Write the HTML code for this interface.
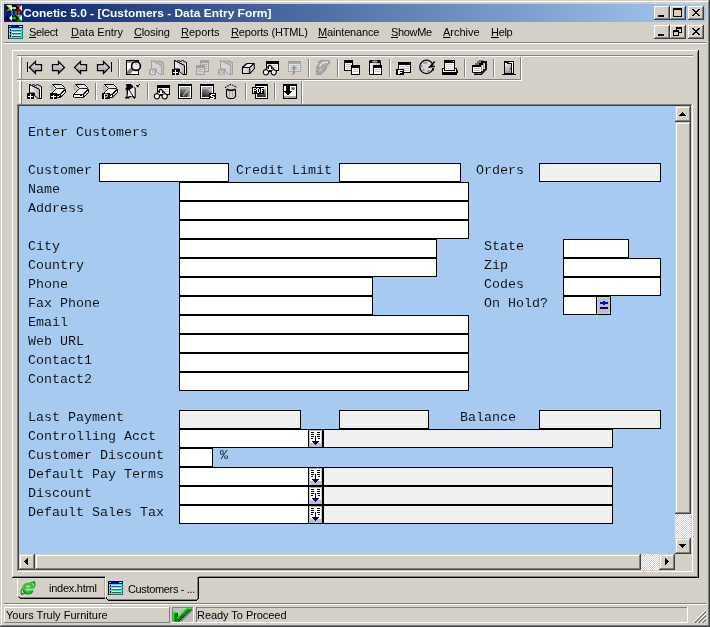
<!DOCTYPE html><html><head><meta charset="utf-8"><title>Conetic</title><style>
html,body{margin:0;padding:0;}
body{width:710px;height:627px;overflow:hidden;background:#d4d0c8;position:relative;font-family:"Liberation Sans",sans-serif;font-size:11px;color:#000;}
div,span,svg{position:absolute;box-sizing:border-box;}
.t{white-space:pre;line-height:1;will-change:transform;}
.m{font-family:"Liberation Mono",monospace;font-size:13.333px;white-space:pre;line-height:1;letter-spacing:0px;-webkit-text-stroke:0.1px #a6caf0;will-change:transform;}
.f{border:1px solid #000;background:#fff;height:19px;}
.g{border:1px solid #000;background:#f0f0f0;height:19px;}
u{text-decoration:underline;text-decoration-thickness:1px;text-underline-offset:1px;}
</style></head><body>
<div style="left:0px;top:0px;width:710px;height:627px;background:#d4d0c8;"></div>
<div style="left:0px;top:0px;width:709px;height:1px;background:#d4d0c8;"></div>
<div style="left:0px;top:0px;width:1px;height:626px;background:#d4d0c8;"></div>
<div style="left:1px;top:1px;width:707px;height:1px;background:#fff;"></div>
<div style="left:1px;top:1px;width:1px;height:624px;background:#fff;"></div>
<div style="left:0px;top:626px;width:710px;height:1px;background:#404040;"></div>
<div style="left:709px;top:0px;width:1px;height:627px;background:#404040;"></div>
<div style="left:1px;top:625px;width:708px;height:1px;background:#808080;"></div>
<div style="left:708px;top:1px;width:1px;height:625px;background:#808080;"></div>
<div style="left:4px;top:4px;width:702px;height:18px;background:linear-gradient(to right,#0a246a,#a6caf0);"></div>
<span class="t" style="left:23px;top:8px;font-weight:bold;font-size:11px;color:#fff;transform-origin:0 0;transform:scaleX(1.087);">Conetic 5.0 - [Customers - Data Entry Form]</span>
<svg style="left:6px;top:5px" width="16" height="16" viewBox="0 0 16 16"><rect x="0" y="0" width="6" height="6" fill="#000"/><polygon points="0,0 6,0 3,3" fill="#ffff00"/><polygon points="0,6 6,6 3,3" fill="#808000"/><polygon points="6,0 6,6 3,3" fill="#fff"/><rect x="10" y="0" width="6" height="6" fill="#000"/><polygon points="10,0 16,0 13,3" fill="#ff0000"/><polygon points="10,6 16,6 13,3" fill="#800000"/><polygon points="16,0 16,6 13,3" fill="#fff"/><rect x="0" y="10" width="6" height="6" fill="#000"/><polygon points="0,10 6,10 3,13" fill="#0000ff"/><polygon points="0,16 6,16 3,13" fill="#000080"/><polygon points="6,10 6,16 3,13" fill="#fff"/><rect x="10" y="10" width="6" height="6" fill="#000"/><polygon points="10,10 16,10 13,13" fill="#00ff00"/><polygon points="10,16 16,16 13,13" fill="#008000"/><polygon points="16,10 16,16 13,13" fill="#fff"/><rect x="6" y="0" width="4" height="6" fill="#000820"/><rect x="6" y="10" width="4" height="6" fill="#000820"/><rect x="1" y="6" width="14" height="4" fill="#061a5a"/><rect x="6" y="2" width="4" height="2" fill="#d8d800"/><rect x="6" y="12" width="4" height="2" fill="#00b800"/><rect x="2" y="6" width="2" height="4" fill="#0000c0"/><rect x="12" y="6" width="2" height="4" fill="#f02020"/><rect x="5" y="6" width="3" height="4" fill="#008890"/><rect x="9" y="6" width="2" height="4" fill="#008088"/><rect x="7" y="4" width="2" height="8" fill="#102878"/></svg>
<div style="left:654px;top:6px;width:16px;height:14px;background:#d4d0c8;"></div><div style="left:654px;top:6px;width:15px;height:1px;background:#fff;"></div><div style="left:654px;top:6px;width:1px;height:13px;background:#fff;"></div><div style="left:654px;top:19px;width:16px;height:1px;background:#404040;"></div><div style="left:669px;top:6px;width:1px;height:14px;background:#404040;"></div><div style="left:655px;top:18px;width:14px;height:1px;background:#808080;"></div><div style="left:668px;top:7px;width:1px;height:12px;background:#808080;"></div>
<div style="left:670px;top:6px;width:16px;height:14px;background:#d4d0c8;"></div><div style="left:670px;top:6px;width:15px;height:1px;background:#fff;"></div><div style="left:670px;top:6px;width:1px;height:13px;background:#fff;"></div><div style="left:670px;top:19px;width:16px;height:1px;background:#404040;"></div><div style="left:685px;top:6px;width:1px;height:14px;background:#404040;"></div><div style="left:671px;top:18px;width:14px;height:1px;background:#808080;"></div><div style="left:684px;top:7px;width:1px;height:12px;background:#808080;"></div>
<div style="left:688px;top:6px;width:16px;height:14px;background:#d4d0c8;"></div><div style="left:688px;top:6px;width:15px;height:1px;background:#fff;"></div><div style="left:688px;top:6px;width:1px;height:13px;background:#fff;"></div><div style="left:688px;top:19px;width:16px;height:1px;background:#404040;"></div><div style="left:703px;top:6px;width:1px;height:14px;background:#404040;"></div><div style="left:689px;top:18px;width:14px;height:1px;background:#808080;"></div><div style="left:702px;top:7px;width:1px;height:12px;background:#808080;"></div>
<div style="left:658px;top:15px;width:6px;height:2px;background:#000;"></div>
<svg style="left:692px;top:9px" width="8" height="7" viewBox="0 0 8 7" shape-rendering="crispEdges"><path d="M0 0h2v1h-2zM6 0h2v1h-2zM1 1h2v1h-2zM5 1h2v1h-2zM2 2h4v1h-4zM3 3h2v1h-2zM2 4h4v1h-4zM1 5h2v1h-2zM5 5h2v1h-2zM0 6h2v1h-2zM6 6h2v1h-2z" fill="#000"/></svg>
<div style="left:654px;top:25px;width:16px;height:14px;background:#d4d0c8;"></div><div style="left:654px;top:25px;width:15px;height:1px;background:#fff;"></div><div style="left:654px;top:25px;width:1px;height:13px;background:#fff;"></div><div style="left:654px;top:38px;width:16px;height:1px;background:#404040;"></div><div style="left:669px;top:25px;width:1px;height:14px;background:#404040;"></div><div style="left:655px;top:37px;width:14px;height:1px;background:#808080;"></div><div style="left:668px;top:26px;width:1px;height:12px;background:#808080;"></div>
<div style="left:670px;top:25px;width:16px;height:14px;background:#d4d0c8;"></div><div style="left:670px;top:25px;width:15px;height:1px;background:#fff;"></div><div style="left:670px;top:25px;width:1px;height:13px;background:#fff;"></div><div style="left:670px;top:38px;width:16px;height:1px;background:#404040;"></div><div style="left:685px;top:25px;width:1px;height:14px;background:#404040;"></div><div style="left:671px;top:37px;width:14px;height:1px;background:#808080;"></div><div style="left:684px;top:26px;width:1px;height:12px;background:#808080;"></div>
<div style="left:688px;top:25px;width:16px;height:14px;background:#d4d0c8;"></div><div style="left:688px;top:25px;width:15px;height:1px;background:#fff;"></div><div style="left:688px;top:25px;width:1px;height:13px;background:#fff;"></div><div style="left:688px;top:38px;width:16px;height:1px;background:#404040;"></div><div style="left:703px;top:25px;width:1px;height:14px;background:#404040;"></div><div style="left:689px;top:37px;width:14px;height:1px;background:#808080;"></div><div style="left:702px;top:26px;width:1px;height:12px;background:#808080;"></div>
<div style="left:658px;top:34px;width:6px;height:2px;background:#000;"></div>
<svg style="left:692px;top:28px" width="8" height="7" viewBox="0 0 8 7" shape-rendering="crispEdges"><path d="M0 0h2v1h-2zM6 0h2v1h-2zM1 1h2v1h-2zM5 1h2v1h-2zM2 2h4v1h-4zM3 3h2v1h-2zM2 4h4v1h-4zM1 5h2v1h-2zM5 5h2v1h-2zM0 6h2v1h-2zM6 6h2v1h-2z" fill="#000"/></svg>
<div style="left:673px;top:8px;width:9px;height:9px;border:1px solid #000;border-top:2px solid #000;"></div>
<div style="left:676px;top:27px;width:6px;height:6px;border:1px solid #000;border-top:2px solid #000;"></div>
<div style="left:673px;top:30px;width:6px;height:6px;background:#d4d0c8;border:1px solid #000;border-top:2px solid #000;"></div>
<svg style="left:8px;top:25px" width="15" height="14" viewBox="0 0 15 14" shape-rendering="crispEdges"><rect width="15" height="14" fill="#00ffff"/><rect width="15" height="3" fill="#000080"/><rect x="1" y="1" width="13" height="1" fill="#0000e0"/><rect x="1" y="1" width="2" height="1" fill="#8080ff"/><rect x="11" y="1" width="3" height="1" fill="#d0d0ff"/><rect x="14" y="3" width="1" height="11" fill="#008080"/><rect y="13" width="15" height="1" fill="#008080"/><rect width="1" height="14" fill="#000"/><rect x="2" y="4" width="1" height="2" fill="#000"/><rect x="4" y="4" width="9" height="1" fill="#fff"/><rect x="4" y="5" width="9" height="1" fill="#804040"/><rect x="2" y="7" width="1" height="2" fill="#000"/><rect x="4" y="7" width="9" height="1" fill="#fff"/><rect x="4" y="8" width="9" height="1" fill="#804040"/><rect x="2" y="10" width="1" height="2" fill="#000"/><rect x="4" y="10" width="9" height="1" fill="#fff"/><rect x="4" y="11" width="9" height="1" fill="#804040"/></svg>
<span class="t" style="left:29.3px;top:27px;letter-spacing:-0.3px"><u>S</u>elect</span>
<span class="t" style="left:70.5px;top:27px;letter-spacing:0px"><u>D</u>ata Entry</span>
<span class="t" style="left:133.5px;top:27px;letter-spacing:-0.15px"><u>C</u>losing</span>
<span class="t" style="left:180.5px;top:27px;letter-spacing:0px"><u>R</u>eports</span>
<span class="t" style="left:230.5px;top:27px;letter-spacing:-0.15px"><u>R</u>eports (HTML)</span>
<span class="t" style="left:317.5px;top:27px;letter-spacing:-0.15px"><u>M</u>aintenance</span>
<span class="t" style="left:390.5px;top:27px;letter-spacing:-0.35px"><u>S</u>howMe</span>
<span class="t" style="left:442.5px;top:27px;letter-spacing:0px"><u>A</u>rchive</span>
<span class="t" style="left:490.5px;top:27px;letter-spacing:-0.3px"><u>H</u>elp</span>
<div style="left:4px;top:42px;width:702px;height:1px;background:#808080;"></div>
<div style="left:4px;top:43px;width:702px;height:1px;background:#fff;"></div>
<div style="left:12px;top:50px;width:686px;height:1px;background:#fff;"></div>
<div style="left:12px;top:50px;width:1px;height:527px;background:#fff;"></div>
<div style="left:12px;top:577px;width:687px;height:1px;background:#000;"></div>
<div style="left:698px;top:50px;width:1px;height:528px;background:#000;"></div>
<div style="left:13px;top:576px;width:685px;height:1px;background:#808080;"></div>
<div style="left:697px;top:51px;width:1px;height:526px;background:#808080;"></div>
<div style="left:17px;top:55px;width:676px;height:1px;background:#808080;"></div>
<div style="left:17px;top:56px;width:676px;height:1px;background:#fff;"></div>
<div style="left:17px;top:79px;width:504px;height:1px;background:#808080;"></div>
<div style="left:17px;top:80px;width:505px;height:1px;background:#fff;"></div>
<div style="left:520px;top:57px;width:1px;height:22px;background:#808080;"></div>
<div style="left:521px;top:57px;width:1px;height:23px;background:#fff;"></div>
<div style="left:301px;top:81px;width:1px;height:23px;background:#808080;"></div>
<div style="left:302px;top:81px;width:1px;height:23px;background:#fff;"></div>
<div style="left:19px;top:57px;width:1px;height:21px;background:#fff;"></div>
<div style="left:20px;top:57px;width:1px;height:21px;background:#fff;"></div>
<div style="left:21px;top:57px;width:1px;height:22px;background:#808080;"></div>
<div style="left:19px;top:81px;width:1px;height:22px;background:#fff;"></div>
<div style="left:20px;top:81px;width:1px;height:22px;background:#fff;"></div>
<div style="left:21px;top:81px;width:1px;height:23px;background:#808080;"></div>
<div style="left:17px;top:104px;width:675px;height:1px;background:#808080;"></div>
<div style="left:17px;top:104px;width:1px;height:467px;background:#808080;"></div>
<div style="left:18px;top:105px;width:673px;height:1px;background:#404040;"></div>
<div style="left:18px;top:105px;width:1px;height:465px;background:#404040;"></div>
<div style="left:17px;top:571px;width:676px;height:1px;background:#fff;"></div>
<div style="left:692px;top:104px;width:1px;height:468px;background:#fff;"></div>
<div style="left:18px;top:570px;width:674px;height:1px;background:#d4d0c8;"></div>
<div style="left:691px;top:105px;width:1px;height:466px;background:#d4d0c8;"></div>
<div style="left:19px;top:106px;width:656px;height:448px;background:#a6caf0;"></div>
<span class="m" style="left:27.6px;top:126px">Enter Customers</span>
<span class="m" style="left:27.6px;top:164px">Customer</span>
<div class="f" style="left:99px;top:163px;width:130px"></div>
<span class="m" style="left:235.6px;top:164px">Credit Limit</span>
<div class="f" style="left:339px;top:163px;width:122px"></div>
<span class="m" style="left:475.6px;top:164px">Orders</span>
<div class="g" style="left:539px;top:163px;width:122px"></div>
<span class="m" style="left:27.6px;top:183px">Name</span>
<div class="f" style="left:179px;top:182px;width:290px"></div>
<span class="m" style="left:27.6px;top:202px">Address</span>
<div class="f" style="left:179px;top:201px;width:290px"></div>
<div class="f" style="left:179px;top:220px;width:290px"></div>
<span class="m" style="left:27.6px;top:240px">City</span>
<div class="f" style="left:179px;top:239px;width:258px"></div>
<span class="m" style="left:483.6px;top:240px">State</span>
<div class="f" style="left:563px;top:239px;width:66px"></div>
<span class="m" style="left:27.6px;top:259px">Country</span>
<div class="f" style="left:179px;top:258px;width:258px"></div>
<span class="m" style="left:483.6px;top:259px">Zip</span>
<div class="f" style="left:563px;top:258px;width:98px"></div>
<span class="m" style="left:27.6px;top:278px">Phone</span>
<div class="f" style="left:179px;top:277px;width:194px"></div>
<span class="m" style="left:483.6px;top:278px">Codes</span>
<div class="f" style="left:563px;top:277px;width:98px"></div>
<span class="m" style="left:27.6px;top:297px">Fax Phone</span>
<div class="f" style="left:179px;top:296px;width:194px"></div>
<span class="m" style="left:483.6px;top:297px">On Hold?</span>
<div class="f" style="left:563px;top:296px;width:34px"></div>
<span class="m" style="left:27.6px;top:316px">Email</span>
<div class="f" style="left:179px;top:315px;width:290px"></div>
<span class="m" style="left:27.6px;top:335px">Web URL</span>
<div class="f" style="left:179px;top:334px;width:290px"></div>
<span class="m" style="left:27.6px;top:354px">Contact1</span>
<div class="f" style="left:179px;top:353px;width:290px"></div>
<span class="m" style="left:27.6px;top:373px">Contact2</span>
<div class="f" style="left:179px;top:372px;width:290px"></div>
<span class="m" style="left:27.6px;top:411px">Last Payment</span>
<div class="g" style="left:179px;top:410px;width:122px"></div>
<div class="g" style="left:339px;top:410px;width:90px"></div>
<span class="m" style="left:459.6px;top:411px">Balance</span>
<div class="g" style="left:539px;top:410px;width:122px"></div>
<span class="m" style="left:27.6px;top:430px">Controlling Acct</span>
<div class="f" style="left:179px;top:429px;width:130px"></div>
<div class="g" style="left:323px;top:429px;width:290px"></div>
<span class="m" style="left:27.6px;top:449px">Customer Discount</span>
<div class="f" style="left:179px;top:448px;width:34px"></div>
<span class="m" style="left:219.6px;top:449px">%</span>
<span class="m" style="left:27.6px;top:468px">Default Pay Terms</span>
<div class="f" style="left:179px;top:467px;width:130px"></div>
<div class="g" style="left:323px;top:467px;width:290px"></div>
<span class="m" style="left:27.6px;top:487px">Discount</span>
<div class="f" style="left:179px;top:486px;width:130px"></div>
<div class="g" style="left:323px;top:486px;width:290px"></div>
<span class="m" style="left:27.6px;top:506px">Default Sales Tax</span>
<div class="f" style="left:179px;top:505px;width:130px"></div>
<div class="g" style="left:323px;top:505px;width:290px"></div>
<div style="left:309px;top:429px;width:14px;height:19px;background:#000"></div><svg style="left:309px;top:430px" width="13" height="17" viewBox="0 0 13 17" shape-rendering="crispEdges"><rect width="13" height="17" fill="#fff"/><rect width="13" height="1" fill="#b0b0b0"/><rect width="1" height="17" fill="#c8c8c8"/><rect x="12" width="1" height="17" fill="#c8c8c8"/><rect y="13" width="13" height="4" fill="#c0c0c0"/><rect x="2" y="2" width="3" height="1" fill="#000"/><rect x="8" y="2" width="3" height="1" fill="#000"/><rect x="2" y="4" width="3" height="1" fill="#000"/><rect x="8" y="4" width="3" height="1" fill="#000"/><rect x="2" y="6" width="3" height="1" fill="#000"/><rect x="8" y="6" width="3" height="1" fill="#000"/><rect x="2" y="8" width="2" height="1" fill="#000"/><rect x="9" y="8" width="2" height="1" fill="#000"/><rect x="6" y="6" width="1" height="6" fill="#000080"/><rect x="3" y="11" width="7" height="1" fill="#000080"/><rect x="4" y="12" width="5" height="1" fill="#000080"/><rect x="5" y="13" width="3" height="1" fill="#000080"/><rect x="6" y="14" width="1" height="1" fill="#000080"/></svg>
<div style="left:309px;top:467px;width:14px;height:19px;background:#000"></div><svg style="left:309px;top:468px" width="13" height="17" viewBox="0 0 13 17" shape-rendering="crispEdges"><rect width="13" height="17" fill="#fff"/><rect width="13" height="1" fill="#b0b0b0"/><rect width="1" height="17" fill="#c8c8c8"/><rect x="12" width="1" height="17" fill="#c8c8c8"/><rect y="13" width="13" height="4" fill="#c0c0c0"/><rect x="2" y="2" width="3" height="1" fill="#000"/><rect x="8" y="2" width="3" height="1" fill="#000"/><rect x="2" y="4" width="3" height="1" fill="#000"/><rect x="8" y="4" width="3" height="1" fill="#000"/><rect x="2" y="6" width="3" height="1" fill="#000"/><rect x="8" y="6" width="3" height="1" fill="#000"/><rect x="2" y="8" width="2" height="1" fill="#000"/><rect x="9" y="8" width="2" height="1" fill="#000"/><rect x="6" y="6" width="1" height="6" fill="#000080"/><rect x="3" y="11" width="7" height="1" fill="#000080"/><rect x="4" y="12" width="5" height="1" fill="#000080"/><rect x="5" y="13" width="3" height="1" fill="#000080"/><rect x="6" y="14" width="1" height="1" fill="#000080"/></svg>
<div style="left:309px;top:486px;width:14px;height:19px;background:#000"></div><svg style="left:309px;top:487px" width="13" height="17" viewBox="0 0 13 17" shape-rendering="crispEdges"><rect width="13" height="17" fill="#fff"/><rect width="13" height="1" fill="#b0b0b0"/><rect width="1" height="17" fill="#c8c8c8"/><rect x="12" width="1" height="17" fill="#c8c8c8"/><rect y="13" width="13" height="4" fill="#c0c0c0"/><rect x="2" y="2" width="3" height="1" fill="#000"/><rect x="8" y="2" width="3" height="1" fill="#000"/><rect x="2" y="4" width="3" height="1" fill="#000"/><rect x="8" y="4" width="3" height="1" fill="#000"/><rect x="2" y="6" width="3" height="1" fill="#000"/><rect x="8" y="6" width="3" height="1" fill="#000"/><rect x="2" y="8" width="2" height="1" fill="#000"/><rect x="9" y="8" width="2" height="1" fill="#000"/><rect x="6" y="6" width="1" height="6" fill="#000080"/><rect x="3" y="11" width="7" height="1" fill="#000080"/><rect x="4" y="12" width="5" height="1" fill="#000080"/><rect x="5" y="13" width="3" height="1" fill="#000080"/><rect x="6" y="14" width="1" height="1" fill="#000080"/></svg>
<div style="left:309px;top:505px;width:14px;height:19px;background:#000"></div><svg style="left:309px;top:506px" width="13" height="17" viewBox="0 0 13 17" shape-rendering="crispEdges"><rect width="13" height="17" fill="#fff"/><rect width="13" height="1" fill="#b0b0b0"/><rect width="1" height="17" fill="#c8c8c8"/><rect x="12" width="1" height="17" fill="#c8c8c8"/><rect y="13" width="13" height="4" fill="#c0c0c0"/><rect x="2" y="2" width="3" height="1" fill="#000"/><rect x="8" y="2" width="3" height="1" fill="#000"/><rect x="2" y="4" width="3" height="1" fill="#000"/><rect x="8" y="4" width="3" height="1" fill="#000"/><rect x="2" y="6" width="3" height="1" fill="#000"/><rect x="8" y="6" width="3" height="1" fill="#000"/><rect x="2" y="8" width="2" height="1" fill="#000"/><rect x="9" y="8" width="2" height="1" fill="#000"/><rect x="6" y="6" width="1" height="6" fill="#000080"/><rect x="3" y="11" width="7" height="1" fill="#000080"/><rect x="4" y="12" width="5" height="1" fill="#000080"/><rect x="5" y="13" width="3" height="1" fill="#000080"/><rect x="6" y="14" width="1" height="1" fill="#000080"/></svg>
<div style="left:597px;top:296px;width:14px;height:19px;background:#000"></div>
<svg style="left:597px;top:297px" width="13" height="17" viewBox="0 0 13 17" shape-rendering="crispEdges"><rect width="13" height="17" fill="#c0c0c0"/><rect x="0.5" y="0.5" width="12" height="16" fill="none" stroke="#d0d0d0"/><rect x="3" y="5" width="8" height="2" fill="#0000ff"/><rect x="6" y="4" width="2" height="4" fill="#0000ff"/><rect x="3" y="10" width="8" height="2" fill="#000080"/></svg>
<div style="left:675px;top:106px;width:16px;height:448px;background-image:linear-gradient(45deg,#fff 25%,transparent 25%,transparent 75%,#fff 75%),linear-gradient(45deg,#fff 25%,transparent 25%,transparent 75%,#fff 75%);background-size:2px 2px;background-position:0 0,1px 1px;background-color:#d4d0c8;"></div>
<div style="left:675px;top:106px;width:16px;height:16px;background:#d4d0c8;"></div><div style="left:675px;top:106px;width:15px;height:1px;background:#d4d0c8;"></div><div style="left:675px;top:106px;width:1px;height:15px;background:#d4d0c8;"></div><div style="left:676px;top:107px;width:13px;height:1px;background:#fff;"></div><div style="left:676px;top:107px;width:1px;height:13px;background:#fff;"></div><div style="left:675px;top:121px;width:16px;height:1px;background:#404040;"></div><div style="left:690px;top:106px;width:1px;height:16px;background:#404040;"></div><div style="left:676px;top:120px;width:14px;height:1px;background:#808080;"></div><div style="left:689px;top:107px;width:1px;height:14px;background:#808080;"></div>
<div style="left:675px;top:538px;width:16px;height:16px;background:#d4d0c8;"></div><div style="left:675px;top:538px;width:15px;height:1px;background:#d4d0c8;"></div><div style="left:675px;top:538px;width:1px;height:15px;background:#d4d0c8;"></div><div style="left:676px;top:539px;width:13px;height:1px;background:#fff;"></div><div style="left:676px;top:539px;width:1px;height:13px;background:#fff;"></div><div style="left:675px;top:553px;width:16px;height:1px;background:#404040;"></div><div style="left:690px;top:538px;width:1px;height:16px;background:#404040;"></div><div style="left:676px;top:552px;width:14px;height:1px;background:#808080;"></div><div style="left:689px;top:539px;width:1px;height:14px;background:#808080;"></div>
<div style="left:675px;top:122px;width:16px;height:392px;background:#d4d0c8;"></div><div style="left:675px;top:122px;width:15px;height:1px;background:#d4d0c8;"></div><div style="left:675px;top:122px;width:1px;height:391px;background:#d4d0c8;"></div><div style="left:676px;top:123px;width:13px;height:1px;background:#fff;"></div><div style="left:676px;top:123px;width:1px;height:389px;background:#fff;"></div><div style="left:675px;top:513px;width:16px;height:1px;background:#404040;"></div><div style="left:690px;top:122px;width:1px;height:392px;background:#404040;"></div><div style="left:676px;top:512px;width:14px;height:1px;background:#808080;"></div><div style="left:689px;top:123px;width:1px;height:390px;background:#808080;"></div>
<svg style="left:679px;top:112px" width="7" height="4" viewBox="0 0 7 4" shape-rendering="crispEdges"><path d="M3 0h1v1h-1zM2 1h3v1h-3zM1 2h5v1h-5zM0 3h7v1h-7z"/></svg>
<svg style="left:679px;top:544px" width="7" height="4" viewBox="0 0 7 4" shape-rendering="crispEdges"><path d="M0 0h7v1h-7zM1 1h5v1h-5zM2 2h3v1h-3zM3 3h1v1h-1z"/></svg>
<div style="left:19px;top:554px;width:656px;height:16px;background-image:linear-gradient(45deg,#fff 25%,transparent 25%,transparent 75%,#fff 75%),linear-gradient(45deg,#fff 25%,transparent 25%,transparent 75%,#fff 75%);background-size:2px 2px;background-position:0 0,1px 1px;background-color:#d4d0c8;"></div>
<div style="left:19px;top:554px;width:16px;height:16px;background:#d4d0c8;"></div><div style="left:19px;top:554px;width:15px;height:1px;background:#d4d0c8;"></div><div style="left:19px;top:554px;width:1px;height:15px;background:#d4d0c8;"></div><div style="left:20px;top:555px;width:13px;height:1px;background:#fff;"></div><div style="left:20px;top:555px;width:1px;height:13px;background:#fff;"></div><div style="left:19px;top:569px;width:16px;height:1px;background:#404040;"></div><div style="left:34px;top:554px;width:1px;height:16px;background:#404040;"></div><div style="left:20px;top:568px;width:14px;height:1px;background:#808080;"></div><div style="left:33px;top:555px;width:1px;height:14px;background:#808080;"></div>
<div style="left:659px;top:554px;width:16px;height:16px;background:#d4d0c8;"></div><div style="left:659px;top:554px;width:15px;height:1px;background:#d4d0c8;"></div><div style="left:659px;top:554px;width:1px;height:15px;background:#d4d0c8;"></div><div style="left:660px;top:555px;width:13px;height:1px;background:#fff;"></div><div style="left:660px;top:555px;width:1px;height:13px;background:#fff;"></div><div style="left:659px;top:569px;width:16px;height:1px;background:#404040;"></div><div style="left:674px;top:554px;width:1px;height:16px;background:#404040;"></div><div style="left:660px;top:568px;width:14px;height:1px;background:#808080;"></div><div style="left:673px;top:555px;width:1px;height:14px;background:#808080;"></div>
<div style="left:35px;top:554px;width:606px;height:16px;background:#d4d0c8;"></div><div style="left:35px;top:554px;width:605px;height:1px;background:#d4d0c8;"></div><div style="left:35px;top:554px;width:1px;height:15px;background:#d4d0c8;"></div><div style="left:36px;top:555px;width:603px;height:1px;background:#fff;"></div><div style="left:36px;top:555px;width:1px;height:13px;background:#fff;"></div><div style="left:35px;top:569px;width:606px;height:1px;background:#404040;"></div><div style="left:640px;top:554px;width:1px;height:16px;background:#404040;"></div><div style="left:36px;top:568px;width:604px;height:1px;background:#808080;"></div><div style="left:639px;top:555px;width:1px;height:14px;background:#808080;"></div>
<svg style="left:24px;top:558px" width="4" height="7" viewBox="0 0 4 7" shape-rendering="crispEdges"><path d="M3 0h1v7h-1zM2 1h1v5h-1zM1 2h1v3h-1zM0 3h1v1h-1z"/></svg>
<svg style="left:665px;top:558px" width="4" height="7" viewBox="0 0 4 7" shape-rendering="crispEdges"><path d="M0 0h1v7h-1zM1 1h1v5h-1zM2 2h1v3h-1zM3 3h1v1h-1z"/></svg>
<div style="left:675px;top:554px;width:16px;height:16px;background:#d4d0c8;"></div>
<div style="left:17px;top:578px;width:1px;height:18px;background:#fff;"></div>
<div style="left:18px;top:596px;width:1px;height:1px;background:#808080;"></div>
<div style="left:19px;top:597px;width:1px;height:1px;background:#000;"></div>
<div style="left:18px;top:597px;width:1px;height:1px;background:#808080;"></div>
<div style="left:20px;top:597px;width:85px;height:1px;background:#808080;"></div>
<div style="left:20px;top:598px;width:85px;height:1px;background:#000;"></div>
<div style="left:104px;top:578px;width:1px;height:19px;background:#b0aca4;"></div>
<span class="t" style="left:48.5px;top:583px;letter-spacing:-0.25px">index.html</span>
<svg style="left:20px;top:580px;overflow:visible" width="16" height="16" viewBox="0 0 16 16"><ellipse cx="8" cy="8" rx="8.3" ry="3.4" transform="rotate(-35 8 8)" fill="none" stroke="#209820" stroke-width="1.3"/><circle cx="8.2" cy="8.2" r="5.8" fill="#34c434"/><path d="M3.2 10 A5.4 5.4 0 0 0 13 11.2" stroke="#1c8c1c" stroke-width="1.3" fill="none"/><ellipse cx="8" cy="6.5" rx="2.3" ry="1" fill="#d4d0c8"/><path d="M5.6 8.8 H14 V10 H10.8 Q8 11.6 5.6 10 Z" fill="#d4d0c8"/><path d="M2.2 13.3 Q0.3 15.3 4 13.4 M12.3 2.8 Q15.6 0.2 13.8 4.2" stroke="#209820" stroke-width="1.4" fill="none"/></svg>
<div style="left:105px;top:576px;width:94px;height:25px;background:#d4d0c8;"></div>
<div style="left:105px;top:577px;width:1px;height:20px;background:#fff;"></div>
<div style="left:106px;top:597px;width:1px;height:2px;background:#000;"></div>
<div style="left:107px;top:599px;width:1px;height:1px;background:#000;"></div>
<div style="left:108px;top:600px;width:89px;height:1px;background:#000;"></div>
<div style="left:108px;top:599px;width:89px;height:1px;background:#808080;"></div>
<div style="left:197px;top:577px;width:1px;height:22px;background:#808080;"></div>
<div style="left:198px;top:577px;width:1px;height:22px;background:#000;"></div>
<div style="left:197px;top:599px;width:1px;height:1px;background:#000;"></div>
<span class="t" style="left:128px;top:584px;letter-spacing:-0.35px">Customers - ...</span>
<svg style="left:108px;top:581px" width="15" height="14" viewBox="0 0 15 14" shape-rendering="crispEdges"><rect width="15" height="14" fill="#00ffff"/><rect width="15" height="3" fill="#000080"/><rect x="1" y="1" width="13" height="1" fill="#0000e0"/><rect x="1" y="1" width="2" height="1" fill="#8080ff"/><rect x="11" y="1" width="3" height="1" fill="#d0d0ff"/><rect x="14" y="3" width="1" height="11" fill="#008080"/><rect y="13" width="15" height="1" fill="#008080"/><rect width="1" height="14" fill="#000"/><rect x="2" y="4" width="1" height="2" fill="#000"/><rect x="4" y="4" width="9" height="1" fill="#fff"/><rect x="4" y="5" width="9" height="1" fill="#804040"/><rect x="2" y="7" width="1" height="2" fill="#000"/><rect x="4" y="7" width="9" height="1" fill="#fff"/><rect x="4" y="8" width="9" height="1" fill="#804040"/><rect x="2" y="10" width="1" height="2" fill="#000"/><rect x="4" y="10" width="9" height="1" fill="#fff"/><rect x="4" y="11" width="9" height="1" fill="#804040"/></svg>
<div style="left:4px;top:603px;width:702px;height:1px;background:#808080;"></div>
<div style="left:4px;top:604px;width:702px;height:1px;background:#fff;"></div>
<div style="left:4px;top:607px;width:165px;height:1px;background:#fff;"></div><div style="left:4px;top:607px;width:1px;height:15px;background:#fff;"></div><div style="left:4px;top:622px;width:166px;height:1px;background:#808080;"></div><div style="left:169px;top:607px;width:1px;height:16px;background:#808080;"></div>
<div style="left:172px;top:607px;width:21px;height:1px;background:#808080;"></div><div style="left:172px;top:607px;width:1px;height:15px;background:#808080;"></div><div style="left:172px;top:622px;width:22px;height:1px;background:#fff;"></div><div style="left:193px;top:607px;width:1px;height:16px;background:#fff;"></div>
<div style="left:196px;top:607px;width:491px;height:1px;background:#808080;"></div><div style="left:196px;top:607px;width:1px;height:15px;background:#808080;"></div><div style="left:196px;top:622px;width:492px;height:1px;background:#fff;"></div><div style="left:687px;top:607px;width:1px;height:16px;background:#fff;"></div>
<div style="left:173px;top:608px;width:20px;height:14px;background:#c0c0c0;"></div>
<svg style="left:172px;top:607px" width="22" height="16" viewBox="172 607 22 16"><path d="M180 621.5 L192.5 609.5" stroke="#808080" stroke-width="1.8" fill="none"/><polygon points="174,613 177,613 177,618 187,608.5 191,608.5 178.5,621.7 174,621.7" fill="#008000"/><path d="M178.3 621.7 L191.6 608.8" stroke="#000080" stroke-width="1" fill="none"/><rect x="177" y="613" width="1" height="4" fill="#000080"/><path d="M173.6 612 V621.7 M173 612.5 H177 M177.2 618.3 L187 608.6 H191" stroke="#00ff00" stroke-width="1.4" fill="none"/></svg>
<span class="t" style="left:6px;top:610px">Yours Truly Furniture</span>
<span class="t" style="left:197px;top:610px;letter-spacing:-0.05px">Ready To Proceed</span>
<svg style="left:693px;top:610px" width="13" height="13" viewBox="693 610 13 13" shape-rendering="crispEdges"><rect x="705" y="610" width="1" height="1" fill="#fff"/><rect x="704" y="611" width="1" height="1" fill="#fff"/><rect x="705" y="611" width="1" height="1" fill="#808080"/><rect x="703" y="612" width="1" height="1" fill="#fff"/><rect x="704" y="612" width="1" height="1" fill="#808080"/><rect x="705" y="612" width="1" height="1" fill="#808080"/><rect x="702" y="613" width="1" height="1" fill="#fff"/><rect x="703" y="613" width="1" height="1" fill="#808080"/><rect x="704" y="613" width="1" height="1" fill="#808080"/><rect x="701" y="614" width="1" height="1" fill="#fff"/><rect x="702" y="614" width="1" height="1" fill="#808080"/><rect x="703" y="614" width="1" height="1" fill="#808080"/><rect x="705" y="614" width="1" height="1" fill="#fff"/><rect x="700" y="615" width="1" height="1" fill="#fff"/><rect x="701" y="615" width="1" height="1" fill="#808080"/><rect x="702" y="615" width="1" height="1" fill="#808080"/><rect x="704" y="615" width="1" height="1" fill="#fff"/><rect x="705" y="615" width="1" height="1" fill="#808080"/><rect x="699" y="616" width="1" height="1" fill="#fff"/><rect x="700" y="616" width="1" height="1" fill="#808080"/><rect x="701" y="616" width="1" height="1" fill="#808080"/><rect x="703" y="616" width="1" height="1" fill="#fff"/><rect x="704" y="616" width="1" height="1" fill="#808080"/><rect x="705" y="616" width="1" height="1" fill="#808080"/><rect x="698" y="617" width="1" height="1" fill="#fff"/><rect x="699" y="617" width="1" height="1" fill="#808080"/><rect x="700" y="617" width="1" height="1" fill="#808080"/><rect x="702" y="617" width="1" height="1" fill="#fff"/><rect x="703" y="617" width="1" height="1" fill="#808080"/><rect x="704" y="617" width="1" height="1" fill="#808080"/><rect x="697" y="618" width="1" height="1" fill="#fff"/><rect x="698" y="618" width="1" height="1" fill="#808080"/><rect x="699" y="618" width="1" height="1" fill="#808080"/><rect x="701" y="618" width="1" height="1" fill="#fff"/><rect x="702" y="618" width="1" height="1" fill="#808080"/><rect x="703" y="618" width="1" height="1" fill="#808080"/><rect x="705" y="618" width="1" height="1" fill="#fff"/><rect x="696" y="619" width="1" height="1" fill="#fff"/><rect x="697" y="619" width="1" height="1" fill="#808080"/><rect x="698" y="619" width="1" height="1" fill="#808080"/><rect x="700" y="619" width="1" height="1" fill="#fff"/><rect x="701" y="619" width="1" height="1" fill="#808080"/><rect x="702" y="619" width="1" height="1" fill="#808080"/><rect x="704" y="619" width="1" height="1" fill="#fff"/><rect x="705" y="619" width="1" height="1" fill="#808080"/><rect x="695" y="620" width="1" height="1" fill="#fff"/><rect x="696" y="620" width="1" height="1" fill="#808080"/><rect x="697" y="620" width="1" height="1" fill="#808080"/><rect x="699" y="620" width="1" height="1" fill="#fff"/><rect x="700" y="620" width="1" height="1" fill="#808080"/><rect x="701" y="620" width="1" height="1" fill="#808080"/><rect x="703" y="620" width="1" height="1" fill="#fff"/><rect x="704" y="620" width="1" height="1" fill="#808080"/><rect x="705" y="620" width="1" height="1" fill="#808080"/><rect x="694" y="621" width="1" height="1" fill="#fff"/><rect x="695" y="621" width="1" height="1" fill="#808080"/><rect x="696" y="621" width="1" height="1" fill="#808080"/><rect x="698" y="621" width="1" height="1" fill="#fff"/><rect x="699" y="621" width="1" height="1" fill="#808080"/><rect x="700" y="621" width="1" height="1" fill="#808080"/><rect x="702" y="621" width="1" height="1" fill="#fff"/><rect x="703" y="621" width="1" height="1" fill="#808080"/><rect x="704" y="621" width="1" height="1" fill="#808080"/><rect x="693" y="622" width="1" height="1" fill="#fff"/><rect x="694" y="622" width="1" height="1" fill="#808080"/><rect x="695" y="622" width="1" height="1" fill="#808080"/><rect x="697" y="622" width="1" height="1" fill="#fff"/><rect x="698" y="622" width="1" height="1" fill="#808080"/><rect x="699" y="622" width="1" height="1" fill="#808080"/><rect x="701" y="622" width="1" height="1" fill="#fff"/><rect x="702" y="622" width="1" height="1" fill="#808080"/><rect x="703" y="622" width="1" height="1" fill="#808080"/></svg>
<svg width="0" height="0" style="left:0;top:0"><defs><linearGradient id="ag" x1="0" y1="0" x2="0" y2="1"><stop offset="0" stop-color="#f4f4f4"/><stop offset="1" stop-color="#909090"/></linearGradient><linearGradient id="fg" x1="0" y1="0" x2="1" y2="0"><stop offset="0" stop-color="#f4f4f4"/><stop offset="1" stop-color="#b8b8b8"/></linearGradient><linearGradient id="dg" x1="0" y1="0" x2="0.4" y2="1"><stop offset="0" stop-color="#f0f0f0"/><stop offset="1" stop-color="#a0a0a0"/></linearGradient><linearGradient id="pg" x1="0.6" y1="0" x2="0.3" y2="1"><stop offset="0" stop-color="#b8b8b8"/><stop offset="0.45" stop-color="#707070"/><stop offset="1" stop-color="#202020"/></linearGradient></defs></svg>
<svg style="left:27px;top:60px;overflow:visible" width="16" height="16" viewBox="0 0 16 16"><rect x="0" y="2" width="1" height="10" fill="#000"/><polygon points="2.5,7.5 8.5,1.5 8.5,4.5 14.5,4.5 14.5,10.5 8.5,10.5 8.5,13.5" fill="url(#ag)" stroke="#000" stroke-width="1.25" stroke-linejoin="miter"/></svg>
<svg style="left:50px;top:60px;overflow:visible" width="16" height="16" viewBox="0 0 16 16"><polygon points="2.5,4.5 8.5,4.5 8.5,1.5 14.5,7.5 8.5,13.5 8.5,10.5 2.5,10.5" fill="url(#ag)" stroke="#000" stroke-width="1.25"/></svg>
<svg style="left:73px;top:60px;overflow:visible" width="16" height="16" viewBox="0 0 16 16"><polygon points="1.5,7.5 7.5,1.5 7.5,4.5 13.5,4.5 13.5,10.5 7.5,10.5 7.5,13.5" fill="url(#ag)" stroke="#000" stroke-width="1.25" stroke-linejoin="miter"/></svg>
<svg style="left:96px;top:60px;overflow:visible" width="16" height="16" viewBox="0 0 16 16"><polygon points="1.5,4.5 7.5,4.5 7.5,1.5 13.5,7.5 7.5,13.5 7.5,10.5 1.5,10.5" fill="url(#ag)" stroke="#000" stroke-width="1.25"/><rect x="15" y="2" width="1" height="10" fill="#000"/></svg>
<svg style="left:126px;top:60px;overflow:visible" width="16" height="16" viewBox="0 0 16 16"><g shape-rendering="crispEdges"><rect x="0" y="0" width="13" height="15" fill="#000"/><rect x="1" y="1" width="11" height="13" fill="#fff"/><rect x="1" y="1" width="6" height="2" fill="#909090"/></g><polygon points="1,14 1,11 5,7.5 8,10 4,14" fill="#808080"/><circle cx="10" cy="6" r="4.4" fill="#ececec" stroke="#000" stroke-width="1.6"/><path d="M9 3.5 l2 1" stroke="#a0a0a0" stroke-width="1" fill="none"/></svg>
<svg style="left:149px;top:60px;overflow:visible" width="16" height="16" viewBox="0 0 16 16"><polygon points="2.5,0.5 3.5,0.5 4.5,1.5 6.5,0.5 8.5,1.5 10.5,0.5 12.5,1.5 14.5,2.5 14.5,14.5 11.5,14.5 11.5,5" fill="#b8b8b8" stroke="#a0a0a0" stroke-width="1" stroke-linejoin="round"/><path d="M13.5 3.5 V14" stroke="#c8c8c8" stroke-width="1" fill="none"/><polygon points="2.5,0.5 4.5,1.5 12.5,5.5 12.5,14.5 11,14.5 7.5,11.5 7.5,9 2.5,9" fill="#d4d4d4" stroke="#a0a0a0" stroke-width="1" stroke-linejoin="round"/><g shape-rendering="crispEdges"><rect x="0" y="9" width="7" height="6" fill="#a8a8a8"/><rect x="2" y="10" width="1" height="4" fill="#e8e8e8"/><rect x="4" y="10" width="1" height="4" fill="#e8e8e8"/><rect x="2" y="13" width="3" height="1" fill="#e8e8e8"/></g></svg>
<svg style="left:172px;top:60px;overflow:visible" width="16" height="16" viewBox="0 0 16 16"><polygon points="2.5,0.5 3.5,0.5 4.5,1.5 6.5,0.5 8.5,1.5 10.5,0.5 12.5,1.5 14.5,2.5 14.5,14.5 11.5,14.5 11.5,5" fill="#c4c4c4" stroke="#000" stroke-width="1" stroke-linejoin="round"/><path d="M13.5 3.5 V14" stroke="#fff" stroke-width="1" fill="none"/><polygon points="2.5,0.5 4.5,1.5 12.5,5.5 12.5,14.5 11,14.5 7.5,11.5 7.5,9 2.5,9" fill="url(#fg)" stroke="#000" stroke-width="1" stroke-linejoin="round"/><g shape-rendering="crispEdges"><rect x="0" y="9" width="7" height="6" fill="#000"/><rect x="1" y="12" width="5" height="1" fill="#fff"/><rect x="3" y="10" width="1" height="5" fill="#fff"/></g></svg>
<svg style="left:196px;top:60px;overflow:visible" width="16" height="16" viewBox="0 0 16 16"><g shape-rendering="crispEdges"><rect x="4" y="0" width="9" height="12" fill="#a0a0a0"/><rect x="5" y="3" width="7" height="8" fill="#d0d0d0"/><rect x="6" y="4" width="5" height="1" fill="#b4b4b4"/><rect x="6" y="6" width="5" height="1" fill="#b4b4b4"/><rect x="6" y="8" width="5" height="1" fill="#b4b4b4"/><rect x="0" y="5" width="9" height="10" fill="#a0a0a0"/><rect x="1" y="8" width="7" height="6" fill="#d0d0d0"/><rect x="2" y="9" width="5" height="1" fill="#b4b4b4"/><rect x="2" y="11" width="5" height="1" fill="#b4b4b4"/></g></svg>
<svg style="left:218px;top:60px;overflow:visible" width="16" height="16" viewBox="0 0 16 16"><polygon points="2.5,0.5 3.5,0.5 4.5,1.5 6.5,0.5 8.5,1.5 10.5,0.5 12.5,1.5 14.5,2.5 14.5,14.5 11.5,14.5 11.5,5" fill="#b8b8b8" stroke="#a0a0a0" stroke-width="1" stroke-linejoin="round"/><path d="M13.5 3.5 V14" stroke="#c8c8c8" stroke-width="1" fill="none"/><polygon points="2.5,0.5 4.5,1.5 12.5,5.5 12.5,14.5 11,14.5 7.5,11.5 7.5,9 2.5,9" fill="#d4d4d4" stroke="#a0a0a0" stroke-width="1" stroke-linejoin="round"/><g shape-rendering="crispEdges"><rect x="0" y="9" width="7" height="6" fill="#a8a8a8"/></g><path d="M1.5 10.5 L5.5 14.5 M5.5 10.5 L1.5 14.5" stroke="#e8e8e8" stroke-width="1"/></svg>
<svg style="left:240px;top:60px;overflow:visible" width="16" height="16" viewBox="0 0 16 16"><polygon points="2.5,7.5 7,3.5 14,3.5 14.4,8.5 10,13.5 2.5,13.5" fill="#e4e4e4" stroke="#000" stroke-width="1.1" stroke-linejoin="round"/><polygon points="2.5,7.5 7,3.5 14,3.5 9.8,7.5" fill="#f4f4f4" stroke="#000" stroke-width="1.1" stroke-linejoin="round"/><rect x="2.5" y="7.5" width="7.3" height="6" rx="1" fill="url(#fg)" stroke="#000" stroke-width="1.1"/></svg>
<svg style="left:263px;top:60px;overflow:visible" width="16" height="16" viewBox="0 0 16 16"><g shape-rendering="crispEdges"><rect x="3" y="1" width="13" height="10" fill="#000"/><rect x="4" y="4" width="11" height="6" fill="#fff"/><rect x="9" y="5" width="5" height="1" fill="#c8c8c8"/><rect x="10" y="7" width="4" height="1" fill="#c8c8c8"/><rect x="5" y="4" width="4" height="1" fill="#d8d8d8"/></g><polygon points="1.2,11.5 6,5.6 7.6,5.6 12.8,11.5" fill="#fff" stroke="#000" stroke-width="1.1"/><g shape-rendering="crispEdges"><rect x="5" y="7" width="1" height="2" fill="#000"/><rect x="8" y="7" width="1" height="2" fill="#000"/><rect x="6" y="10" width="2" height="2" fill="#000"/></g><circle cx="2.9" cy="12.3" r="2.6" fill="#fff" stroke="#000" stroke-width="1.05"/><circle cx="10.7" cy="12.3" r="2.6" fill="#fff" stroke="#000" stroke-width="1.05"/></svg>
<svg style="left:286px;top:60px;overflow:visible" width="16" height="16" viewBox="0 0 16 16"><g shape-rendering="crispEdges"><rect x="2" y="1" width="13" height="11" fill="#a8a8a8"/><rect x="2" y="1" width="13" height="1" fill="#989898"/><rect x="3" y="4" width="11" height="7" fill="#e0e0e0"/><rect x="4" y="5" width="9" height="1" fill="#c4c4c4"/><rect x="4" y="7" width="9" height="1" fill="#c4c4c4"/><rect x="4" y="9" width="9" height="1" fill="#c4c4c4"/><rect x="7" y="8" width="2" height="6" fill="#989898"/><rect x="6" y="13" width="1" height="2" fill="#989898"/></g><polygon points="8,5.2 11,8.8 5,8.8" fill="#989898"/></svg>
<svg style="left:315px;top:60px;overflow:visible" width="16" height="16" viewBox="0 0 16 16"><polygon points="5,0.5 14.5,0.5 14.5,3.8 13,4 11,7 12,8 10.5,9 10,11 9,11 6,14.5 1,14.5 2.5,11.5 1,11.5 3,8 1,8 5,2.5 3,2.5" fill="#a8a8a8" stroke="#989898" stroke-width="1" stroke-linejoin="round"/><path d="M13 1.8 L7.5 2.8 L4.5 6.5" stroke="#dcdcdc" stroke-width="1.8" fill="none"/><path d="M7 8.5 L4.5 11" stroke="#c8c8c8" stroke-width="1.2" fill="none"/></svg>
<svg style="left:344px;top:60px;overflow:visible" width="16" height="16" viewBox="0 0 16 16"><g shape-rendering="crispEdges"><rect x="0" y="0" width="9" height="11" fill="#000"/><rect x="1" y="3" width="7" height="7" fill="#fff"/><rect x="2" y="4" width="5" height="1" fill="#c0c0c0"/><rect x="2" y="6" width="5" height="1" fill="#c0c0c0"/><rect x="2" y="8" width="5" height="1" fill="#c0c0c0"/><rect x="7" y="5" width="9" height="10" fill="#000"/><rect x="8" y="8" width="7" height="6" fill="#fff"/><rect x="9" y="9" width="5" height="1" fill="#c0c0c0"/><rect x="9" y="11" width="5" height="1" fill="#c0c0c0"/></g></svg>
<svg style="left:367px;top:60px;overflow:visible" width="16" height="16" viewBox="0 0 16 16"><rect x="2" y="0" width="12" height="15" rx="1.5" fill="#000"/><rect x="3" y="3" width="10" height="11" fill="url(#fg)"/><ellipse cx="8" cy="1.6" rx="3.2" ry="1.1" fill="#a0a0a0"/><g shape-rendering="crispEdges"><rect x="6" y="5" width="9" height="10" fill="#000"/><rect x="7" y="8" width="7" height="6" fill="#fff"/><rect x="8" y="9" width="5" height="1" fill="#c0c0c0"/><rect x="8" y="11" width="5" height="1" fill="#c0c0c0"/></g></svg>
<svg style="left:396px;top:60px;overflow:visible" width="16" height="16" viewBox="0 0 16 16"><g shape-rendering="crispEdges"><rect x="2" y="2" width="13" height="11" fill="#000"/><rect x="3" y="5" width="11" height="7" fill="#fff"/><rect x="4" y="6" width="9" height="1" fill="#c0c0c0"/><rect x="4" y="8" width="9" height="1" fill="#c0c0c0"/><rect x="4" y="10" width="9" height="1" fill="#c0c0c0"/><rect x="0" y="9" width="8" height="6" fill="#000"/><rect x="2" y="10" width="2" height="4" fill="#fff"/><rect x="2" y="10" width="5" height="1" fill="#fff"/><rect x="2" y="12" width="4" height="1" fill="#fff"/></g></svg>
<svg style="left:419px;top:60px;overflow:visible" width="16" height="16" viewBox="0 0 16 16"><circle cx="7.5" cy="6.9" r="6.7" fill="#d8d8d8" stroke="#000" stroke-width="1.3"/><path d="M4.2 2.8 L8.2 2.6 M2.2 5 L3 7.2 M4 9 L5.5 10.6 M8 11.2 L11 10.8" stroke="#909090" stroke-width="1.7" fill="none"/><polygon points="16.5,4.5 11.5,7.3 16.5,8.6" fill="#d4d0c8"/><path d="M15.7 1.6 L10.6 7 L15.8 6.3" stroke="#000" stroke-width="1.4" fill="none" stroke-linejoin="miter"/><path d="M14.6 8.2 Q14.4 9.5 13.7 10.8" stroke="#000" stroke-width="1.3" fill="none"/></svg>
<svg style="left:442px;top:60px;overflow:visible" width="16" height="16" viewBox="0 0 16 16"><g shape-rendering="crispEdges"><rect x="0" y="8" width="15" height="7" fill="#000"/><rect x="1" y="9" width="13" height="3" fill="#fff"/><rect x="15" y="10" width="1" height="3" fill="#000"/><rect x="2" y="0" width="11" height="11" fill="#000"/><rect x="3" y="3" width="9" height="7" fill="#fff"/><rect x="4" y="4" width="7" height="1" fill="#d0d0d0"/><rect x="4" y="6" width="7" height="1" fill="#d0d0d0"/><rect x="4" y="8" width="7" height="1" fill="#d0d0d0"/><rect x="11" y="1" width="1" height="1" fill="#e0e0e0"/></g></svg>
<svg style="left:472px;top:60px;overflow:visible" width="16" height="16" viewBox="0 0 16 16"><polygon points="0,5 0,12.5 2,13 2,15 9.5,15 15,9.5 15,1 9,1 9,3 7,3 7,5" fill="#000"/><g shape-rendering="crispEdges"><rect x="7" y="0" width="5" height="1" fill="#707070"/><rect x="5" y="1" width="4" height="2" fill="#707070"/><rect x="3" y="3" width="4" height="2" fill="#707070"/><rect x="1" y="7" width="8" height="5" fill="#fff"/><rect x="2" y="8" width="6" height="1" fill="#c8c8c8"/><rect x="2" y="10" width="6" height="1" fill="#c8c8c8"/></g><rect x="9.4" y="5" width="1.5" height="6" fill="#fff"/><rect x="11.4" y="3" width="1.5" height="6" fill="#fff"/><rect x="2" y="13" width="7.5" height="0.6" fill="#b0b0b0"/><path d="M10 12.5 L14 8.5" stroke="#d4d0c8" stroke-width=".7" stroke-dasharray=".8 .8" fill="none"/></svg>
<svg style="left:500px;top:60px;overflow:visible" width="16" height="16" viewBox="0 0 16 16"><g shape-rendering="crispEdges"><rect x="4" y="1" width="10" height="14" fill="#000"/><rect x="5" y="3" width="6" height="10" fill="url(#dg)"/><rect x="7" y="3" width="4" height="1" fill="#000"/><rect x="5" y="3" width="1" height="2" fill="#fff"/><rect x="10" y="8" width="1" height="1" fill="#000"/><rect x="9" y="2" width="4" height="1" fill="#fff"/><rect x="12" y="2" width="1" height="11" fill="#fff"/><rect x="2" y="14" width="14" height="1" fill="#000"/></g></svg>
<svg style="left:27px;top:84px;overflow:visible" width="16" height="16" viewBox="0 0 16 16"><polygon points="2.5,0.5 3.5,0.5 4.5,1.5 6.5,0.5 8.5,1.5 10.5,0.5 12.5,1.5 14.5,2.5 14.5,14.5 11.5,14.5 11.5,5" fill="#c4c4c4" stroke="#000" stroke-width="1" stroke-linejoin="round"/><path d="M13.5 3.5 V14" stroke="#fff" stroke-width="1" fill="none"/><polygon points="2.5,0.5 4.5,1.5 12.5,5.5 12.5,14.5 11,14.5 7.5,11.5 7.5,9 2.5,9" fill="url(#fg)" stroke="#000" stroke-width="1" stroke-linejoin="round"/><g shape-rendering="crispEdges"><rect x="0" y="9" width="7" height="6" fill="#000"/><rect x="1" y="12" width="5" height="1" fill="#fff"/><rect x="3" y="10" width="1" height="5" fill="#fff"/></g></svg>
<svg style="left:50px;top:84px;overflow:visible" width="16" height="16" viewBox="0 0 16 16"><path d="M0.5 1.5 l2.5 1 M0.5 3.5 l3 1 M1 5.5 l3 1" stroke="#a0a0a0" stroke-width="1" fill="none"/><polygon points="2.5,0.5 11.5,0.5 14.5,3.5 14.5,4.5 6.5,4.5" fill="#e4e4e4" stroke="#000" stroke-linejoin="round"/><polygon points="6.5,4.5 0.5,10.5 0.5,13 1.5,13.5 10.5,13.5 15.5,8.5 15.5,5.5 14.5,5.5 10.5,9.5" fill="#f4f4f4" stroke="#000" stroke-linejoin="round"/><path d="M0.5 10.5 H10.5 L15.5 5.5 M10.5 10.5 V13.5" stroke="#000" fill="none"/><polygon points="6.5,4.8 14,5 10.3,9.3 2,9.8" fill="#f0f0f0"/><path d="M11.5 12 L15 8.5" stroke="#000" stroke-dasharray="1.2 1" fill="none"/><g shape-rendering="crispEdges"><rect x="7" y="11" width="2" height="1" fill="#000"/></g><g shape-rendering="crispEdges"><rect x="0" y="9" width="7" height="6" fill="#000"/><rect x="1" y="12" width="5" height="1" fill="#fff"/><rect x="3" y="11" width="1" height="4" fill="#fff"/><rect x="7" y="12" width="3" height="2" fill="#000"/><rect x="7" y="12" width="2" height="1" fill="#fff"/></g></svg>
<svg style="left:73px;top:84px;overflow:visible" width="16" height="16" viewBox="0 0 16 16"><path d="M0.5 1.5 l2.5 1 M0.5 3.5 l3 1 M1 5.5 l3 1" stroke="#a0a0a0" stroke-width="1" fill="none"/><polygon points="2.5,0.5 11.5,0.5 14.5,3.5 14.5,4.5 6.5,4.5" fill="#e4e4e4" stroke="#000" stroke-linejoin="round"/><polygon points="6.5,4.5 0.5,10.5 0.5,13 1.5,13.5 10.5,13.5 15.5,8.5 15.5,5.5 14.5,5.5 10.5,9.5" fill="#f4f4f4" stroke="#000" stroke-linejoin="round"/><path d="M0.5 10.5 H10.5 L15.5 5.5 M10.5 10.5 V13.5" stroke="#000" fill="none"/><polygon points="6.5,4.8 14,5 10.3,9.3 2,9.8" fill="#f0f0f0"/><path d="M11.5 12 L15 8.5" stroke="#000" stroke-dasharray="1.2 1" fill="none"/><g shape-rendering="crispEdges"><rect x="7" y="11" width="2" height="1" fill="#000"/></g></svg>
<svg style="left:102px;top:84px;overflow:visible" width="16" height="16" viewBox="0 0 16 16"><path d="M0.5 1.5 l2.5 1 M0.5 3.5 l3 1 M1 5.5 l3 1" stroke="#a0a0a0" stroke-width="1" fill="none"/><polygon points="2.5,0.5 11.5,0.5 14.5,3.5 14.5,4.5 6.5,4.5" fill="#e4e4e4" stroke="#000" stroke-linejoin="round"/><polygon points="6.5,4.5 0.5,10.5 0.5,13 1.5,13.5 10.5,13.5 15.5,8.5 15.5,5.5 14.5,5.5 10.5,9.5" fill="#f4f4f4" stroke="#000" stroke-linejoin="round"/><path d="M0.5 10.5 H10.5 L15.5 5.5 M10.5 10.5 V13.5" stroke="#000" fill="none"/><polygon points="6.5,4.8 14,5 10.3,9.3 2,9.8" fill="#f0f0f0"/><path d="M11.5 12 L15 8.5" stroke="#000" stroke-dasharray="1.2 1" fill="none"/><g shape-rendering="crispEdges"><rect x="7" y="11" width="2" height="1" fill="#000"/></g><g shape-rendering="crispEdges"><rect x="0" y="9" width="8" height="6" fill="#000"/></g><circle cx="4" cy="11.5" r="1.6" fill="none" stroke="#fff" stroke-width="1"/><g shape-rendering="crispEdges"><rect x="2" y="10" width="1" height="5" fill="#fff"/><rect x="8" y="12" width="2" height="1" fill="#fff"/></g></svg>
<svg style="left:125px;top:84px;overflow:visible" width="16" height="16" viewBox="0 0 16 16"><polygon points="1,0 6,0 8.5,2.8 10.7,4 10.7,13.5 9.3,15 7.8,13 4.5,13.2 4.5,14.6 0,14.6 0,13.5 1.6,12.3 1.6,6 0.5,5.6 0.5,4.2 1.6,3.6" fill="#000"/><polygon points="3,6.5 5.2,5.5 8.6,3 9.6,4.5 9.7,13.2 8.8,12 7.5,12.5 5,12 2.5,12.8 3,9" fill="#f4f4f4"/><path d="M4 5.5 L9 14" stroke="#000" stroke-width=".9"/><polygon points="10.5,1.3 14,1 13.2,3.6" fill="#000"/><rect x="14" y="0" width="1" height="1" fill="#000"/><path d="M9.5 2.5 l1.5 -1 M12 4.5 l1 1.5" stroke="#fff" stroke-width="1"/></svg>
<svg style="left:154px;top:84px;overflow:visible" width="16" height="16" viewBox="0 0 16 16"><g shape-rendering="crispEdges"><rect x="3" y="1" width="13" height="10" fill="#000"/><rect x="4" y="4" width="11" height="6" fill="#fff"/><rect x="9" y="5" width="5" height="1" fill="#c8c8c8"/><rect x="10" y="7" width="4" height="1" fill="#c8c8c8"/><rect x="5" y="4" width="4" height="1" fill="#d8d8d8"/></g><polygon points="1.2,11.5 6,5.6 7.6,5.6 12.8,11.5" fill="#fff" stroke="#000" stroke-width="1.1"/><g shape-rendering="crispEdges"><rect x="5" y="7" width="1" height="2" fill="#000"/><rect x="8" y="7" width="1" height="2" fill="#000"/><rect x="6" y="10" width="2" height="2" fill="#000"/></g><circle cx="2.9" cy="12.3" r="2.6" fill="#fff" stroke="#000" stroke-width="1.05"/><circle cx="10.7" cy="12.3" r="2.6" fill="#fff" stroke="#000" stroke-width="1.05"/></svg>
<svg style="left:177px;top:84px;overflow:visible" width="16" height="16" viewBox="0 0 16 16"><g transform="translate(1,0)"><g shape-rendering="crispEdges"><rect x="0" y="0" width="14" height="15" fill="#000"/><rect x="1" y="2" width="12" height="12" fill="#fff"/><rect x="2" y="3" width="10" height="10" fill="url(#pg)"/><rect x="2" y="3" width="10" height="2" fill="#a8a8a8"/></g><path d="M11.5 4 L5 12" stroke="#b8b8b8" stroke-width="1.4" opacity=".8"/><polygon points="12,5 12,13 9,13" fill="#c0c0c0" opacity=".6"/></g></svg>
<svg style="left:200px;top:84px;overflow:visible" width="16" height="16" viewBox="0 0 16 16"><g shape-rendering="crispEdges"><rect x="0" y="0" width="14" height="15" fill="#000"/><rect x="1" y="2" width="12" height="12" fill="#fff"/><rect x="2" y="3" width="10" height="10" fill="url(#pg)"/><rect x="2" y="3" width="10" height="2" fill="#a8a8a8"/></g><polygon points="12,4 12,9 8,6" fill="#d0d0d0" opacity=".7"/><g shape-rendering="crispEdges"><rect x="9" y="9" width="7" height="6" fill="#000"/><rect x="11" y="10" width="4" height="1" fill="#fff"/><rect x="10" y="11" width="2" height="1" fill="#fff"/><rect x="11" y="12" width="3" height="1" fill="#fff"/><rect x="13" y="13" width="2" height="1" fill="#fff"/><rect x="10" y="14" width="4" height="1" fill="#fff"/></g></svg>
<svg style="left:224px;top:84px;overflow:visible" width="16" height="16" viewBox="0 0 16 16"><path d="M2.5 4 V12.3 L4.5 14.5 H9.5 L11.5 12.3 V4 Z" fill="#d2d2d2" stroke="#000" stroke-width="1.1" stroke-linejoin="round"/><path d="M5.5 7 V13.5 M8.5 7 V13.5" stroke="#a8a8a8" stroke-width="1"/><polygon points="1,3.5 6.5,0.5 7.5,0.5 13,3.5 11.5,5.5 2.5,5.5" fill="#d0d0d0"/><path d="M1 3.5 L6.5 0.6 H7.5 L13 3.5" fill="none" stroke="#000" stroke-width="1.1" stroke-dasharray="1.6 1"/><path d="M2.6 5.3 Q7 7.3 11.4 5.3" stroke="#000" stroke-width="1.7" fill="none"/></svg>
<svg style="left:252px;top:84px;overflow:visible" width="16" height="16" viewBox="0 0 16 16"><g shape-rendering="crispEdges"><rect x="3" y="0" width="13" height="15" fill="#000"/><rect x="4" y="2" width="11" height="12" fill="#fff"/><rect x="5" y="3" width="9" height="10" fill="url(#pg)"/><rect x="5" y="3" width="9" height="2" fill="#d8d8d8"/><rect x="0" y="3" width="12" height="7" fill="#000"/><rect x="1" y="4" width="1" height="5" fill="#fff"/><rect x="2" y="4" width="2" height="1" fill="#fff"/><rect x="4" y="5" width="1" height="1" fill="#fff"/><rect x="2" y="6" width="2" height="1" fill="#fff"/><rect x="5" y="4" width="1" height="5" fill="#fff"/><rect x="6" y="4" width="1" height="1" fill="#fff"/><rect x="7" y="5" width="1" height="3" fill="#fff"/><rect x="6" y="8" width="1" height="1" fill="#fff"/><rect x="9" y="4" width="1" height="5" fill="#fff"/><rect x="10" y="4" width="2" height="1" fill="#fff"/><rect x="10" y="6" width="1" height="1" fill="#fff"/></g></svg>
<svg style="left:281px;top:84px;overflow:visible" width="16" height="16" viewBox="0 0 16 16"><g shape-rendering="crispEdges"><rect x="2" y="0" width="14" height="15" fill="#000"/><rect x="3" y="2" width="12" height="12" fill="#fff"/><rect x="3" y="12" width="12" height="2" fill="#a8a8a8"/><rect x="10" y="3" width="4" height="3" fill="#a0a0a0"/><rect x="11" y="4" width="2" height="1" fill="#404040"/><rect x="5" y="2" width="4" height="5" fill="#000"/><rect x="3" y="7" width="8" height="1" fill="#000"/><rect x="4" y="8" width="6" height="1" fill="#000"/><rect x="5" y="9" width="4" height="1" fill="#000"/><rect x="6" y="10" width="2" height="1" fill="#000"/></g></svg>
<div style="left:118px;top:59px;width:1px;height:18px;background:#808080"></div><div style="left:119px;top:59px;width:1px;height:18px;background:#fff"></div>
<div style="left:308px;top:59px;width:1px;height:18px;background:#808080"></div><div style="left:309px;top:59px;width:1px;height:18px;background:#fff"></div>
<div style="left:337px;top:59px;width:1px;height:18px;background:#808080"></div><div style="left:338px;top:59px;width:1px;height:18px;background:#fff"></div>
<div style="left:389px;top:59px;width:1px;height:18px;background:#808080"></div><div style="left:390px;top:59px;width:1px;height:18px;background:#fff"></div>
<div style="left:464px;top:59px;width:1px;height:18px;background:#808080"></div><div style="left:465px;top:59px;width:1px;height:18px;background:#fff"></div>
<div style="left:493px;top:59px;width:1px;height:18px;background:#808080"></div><div style="left:494px;top:59px;width:1px;height:18px;background:#fff"></div>
<div style="left:95px;top:83px;width:1px;height:17px;background:#808080"></div><div style="left:96px;top:83px;width:1px;height:17px;background:#fff"></div>
<div style="left:147px;top:83px;width:1px;height:17px;background:#808080"></div><div style="left:148px;top:83px;width:1px;height:17px;background:#fff"></div>
<div style="left:245px;top:83px;width:1px;height:17px;background:#808080"></div><div style="left:246px;top:83px;width:1px;height:17px;background:#fff"></div>
<div style="left:274px;top:83px;width:1px;height:17px;background:#808080"></div><div style="left:275px;top:83px;width:1px;height:17px;background:#fff"></div>
</body></html>
